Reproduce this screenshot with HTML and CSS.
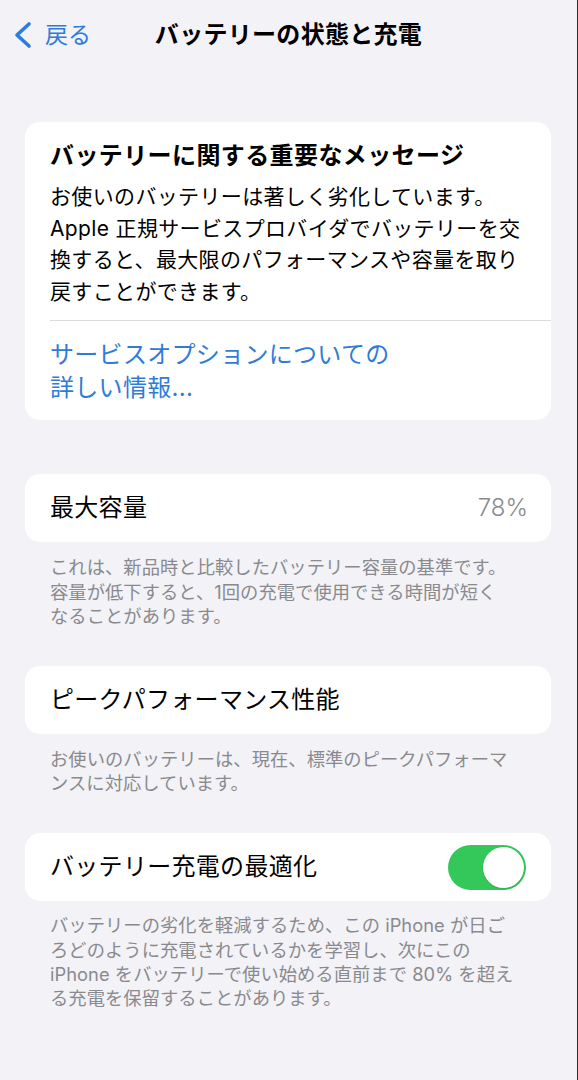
FILE: index.html
```html
<!DOCTYPE html>
<html lang="ja">
<head>
<meta charset="utf-8">
<title>バッテリーの状態と充電</title>
<link rel="stylesheet" href="styles.css">
</head>
<body>
<div class="screen">
  <header class="nav">
    <a class="back" href="#">
      <svg class="chevron" viewBox="0 0 22 28" width="22" height="28" aria-hidden="true">
        <polyline points="17,3 5,14 17,25" fill="none" stroke="currentColor" stroke-width="3.6" stroke-linecap="round" stroke-linejoin="round"/>
      </svg>
      <span>戻る</span>
    </a>
    <h1 class="title">バッテリーの状態と充電</h1>
    <span class="nav-spacer"></span>
  </header>

  <main class="content">
    <section class="card message">
      <h2 class="message-title">バッテリーに関する重要なメッセージ</h2>
      <p class="message-body">お使いのバッテリーは著しく劣化しています。<br>Apple 正規サービスプロバイダでバッテリーを交<br>換すると、最大限のパフォーマンスや容量を取り<br>戻すことができます。</p>
      <div class="separator"></div>
      <a class="message-link" href="#">サービスオプションについての<br>詳しい情報...</a>
    </section>

    <section class="group first">
      <div class="card row">
        <span class="row-label">最大容量</span>
        <span class="row-value">78%</span>
      </div>
      <p class="footnote">これは、新品時と比較したバッテリー容量の基準です。<br>容量が低下すると、1回の充電で使用できる時間が短く<br>なることがあります。</p>
    </section>

    <section class="group">
      <div class="card row">
        <span class="row-label">ピークパフォーマンス性能</span>
      </div>
      <p class="footnote">お使いのバッテリーは、現在、標準のピークパフォーマ<br>ンスに対応しています。</p>
    </section>

    <section class="group">
      <div class="card row">
        <span class="row-label">バッテリー充電の最適化</span>
        <span class="toggle on"><span class="knob"></span></span>
      </div>
      <p class="footnote footnote-tight">バッテリーの劣化を軽減するため、この iPhone が日ご<br>ろどのように充電されているかを学習し、次にこの<br>iPhone をバッテリーで使い始める直前まで 80% を超え<br>る充電を保留することがあります。</p>
    </section>
  </main>
</div>
</body>
</html>
```

FILE: styles.css
```css
html, body {
  margin: 0;
  padding: 0;
  background: #f2f2f7;
}

body {
  font-family: Inter, "Noto Sans CJK JP", sans-serif;
  color: #000;
  -webkit-font-smoothing: antialiased;
}

.screen {
  width: 578px;
  min-height: 1080px;
  box-sizing: border-box;
  border-right: 1px solid #2a2a2c;
  background: #f2f2f7;
}

/* Navigation bar */
.nav {
  height: 70px;
  display: grid;
  grid-template-columns: 1fr auto 1fr;
  align-items: center;
  padding: 0 12px;
}

.back {
  display: flex;
  align-items: center;
  gap: 11px;
  color: #2f7cd8;
  text-decoration: none;
  font-size: 23px;
  line-height: 30px;
  justify-self: start;
}

.chevron {
  display: block;
  color: #2b7de0;
}

.title {
  margin: 0;
  font-size: 24px;
  letter-spacing: 0.3px;
  font-weight: 700;
  line-height: 32px;
  white-space: nowrap;
}

/* Content */
.content {
  padding: 52px 26px 0 25px;
}

.card {
  background: #fff;
  border-radius: 15px;
}

.message {
  padding: 18px 0 16px 25px;
}

.message-title {
  margin: 0;
  padding-right: 25px;
  font-size: 24px;
  letter-spacing: 0.4px;
  font-weight: 700;
  line-height: 32px;
  white-space: nowrap;
}

.message-body {
  margin: 9px 0 0;
  padding-right: 10px;
  font-size: 21px;
  line-height: 31.6px;
  letter-spacing: 0.35px;
  white-space: nowrap;
}

.separator {
  height: 1px;
  background: #dcdce0;
  margin-top: 13px;
}

.message-link {
  display: block;
  padding-top: 17px;
  font-size: 24px;
  letter-spacing: 0.3px;
  line-height: 33px;
  color: #2f7cd6;
  text-decoration: none;
  white-space: nowrap;
}

/* Groups */
.group {
  margin-top: 38px;
}

.group.first {
  margin-top: 54px;
}

.row {
  height: 68px;
  box-sizing: border-box;
  padding: 0 25px;
  display: flex;
  align-items: center;
  justify-content: space-between;
}

.row-label {
  font-size: 24px;
  letter-spacing: 0.3px;
  line-height: 32px;
  white-space: nowrap;
}

.row-value {
  font-size: 24px;
  line-height: 32px;
  font-weight: 300;
  color: #8a8a8e;
  margin-right: -2px;
}

.footnote {
  margin: 13px 0 0;
  padding: 0 10px 0 25px;
  font-size: 18.3px;
  line-height: 24.2px;
  letter-spacing: 0.05px;
  color: #8a8a8e;
  white-space: nowrap;
}

.footnote-tight {
  margin-top: 12px;
}

/* Toggle */
.toggle {
  position: relative;
  display: block;
  width: 78px;
  height: 45px;
  border-radius: 23px;
  background: #e9e9eb;
  flex: none;
}

.toggle.on {
  background: #34c759;
}

.knob {
  position: absolute;
  top: 2px;
  right: 2px;
  width: 41px;
  height: 41px;
  border-radius: 50%;
  background: #fff;
  box-shadow: 0 1px 2px rgba(0, 0, 0, 0.12);
}
```
